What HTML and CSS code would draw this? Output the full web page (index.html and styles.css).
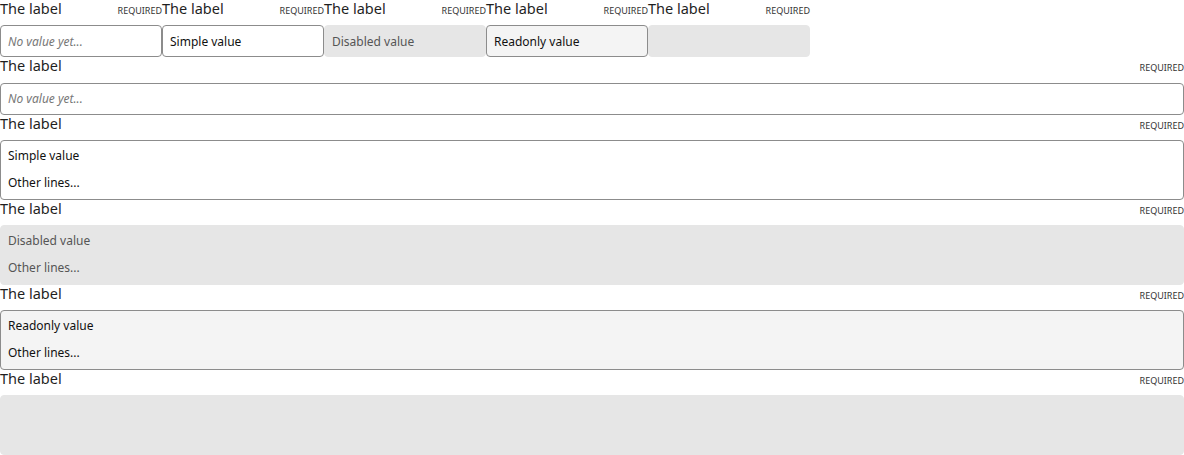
FILE: index.html
```html
<!DOCTYPE html>
<html>
<head>
<meta charset="utf-8">
<link rel="stylesheet" href="styles.css">
</head>
<body>
<div class="row">
  <div class="field">
    <div class="head"><span class="label">The label</span><span class="req">Required</span></div>
    <div class="box single"><span class="ph">No value yet...</span></div>
  </div>
  <div class="field">
    <div class="head"><span class="label">The label</span><span class="req">Required</span></div>
    <div class="box single">Simple value</div>
  </div>
  <div class="field">
    <div class="head"><span class="label">The label</span><span class="req">Required</span></div>
    <div class="box single disabled">Disabled value</div>
  </div>
  <div class="field">
    <div class="head"><span class="label">The label</span><span class="req">Required</span></div>
    <div class="box single readonly">Readonly value</div>
  </div>
  <div class="field">
    <div class="head"><span class="label">The label</span><span class="req">Required</span></div>
    <div class="box single disabled"></div>
  </div>
</div>
<div class="field wide">
  <div class="head"><span class="label">The label</span><span class="req">Required</span></div>
  <div class="box single"><span class="ph">No value yet...</span></div>
</div>
<div class="field wide">
  <div class="head"><span class="label">The label</span><span class="req">Required</span></div>
  <div class="box multi"><div>Simple value</div><div>Other lines...</div></div>
</div>
<div class="field wide">
  <div class="head"><span class="label">The label</span><span class="req">Required</span></div>
  <div class="box multi disabled"><div>Disabled value</div><div>Other lines...</div></div>
</div>
<div class="field wide">
  <div class="head"><span class="label">The label</span><span class="req">Required</span></div>
  <div class="box multi readonly"><div>Readonly value</div><div>Other lines...</div></div>
</div>
<div class="field wide">
  <div class="head"><span class="label">The label</span><span class="req">Required</span></div>
  <div class="box multi disabled"></div>
</div>
</body>
</html>
```
FILE: styles.css
```css
html, body {
  margin: 0;
  padding: 0;
  background: #fff;
  font-family: "Noto Sans", "Open Sans", sans-serif;
  color: #1a1a1a;
}
.row {
  display: flex;
}
.field {
  display: flex;
  flex-direction: column;
  width: 162px;
}
.field.wide {
  width: 1184px;
}
.head {
  height: 25.45px;
  display: flex;
  justify-content: space-between;
  align-items: flex-start;
}
.label {
  font-size: 14.5px;
  line-height: 16px;
  color: #1f1f1f;
}
.req {
  font-size: 9px;
  text-transform: uppercase;
  line-height: 9px;
  margin-top: 6px;
  color: #333;
}
.box {
  box-sizing: border-box;
  border: 1px solid #8c8c8c;
  border-radius: 4px;
  background: #fff;
  font-size: 12px;
  color: #111;
  padding: 0 7px;
}
.single {
  height: 32px;
  display: flex;
  align-items: center;
}
.multi {
  height: 59.575px;
  line-height: 27px;
  padding-top: 0.5px;
}
.ph {
  font-style: italic;
  color: #777;
}
.disabled {
  background: #e6e6e6;
  border-color: #e6e6e6;
  color: #555;
}
.readonly {
  background: #f4f4f4;
}
```
